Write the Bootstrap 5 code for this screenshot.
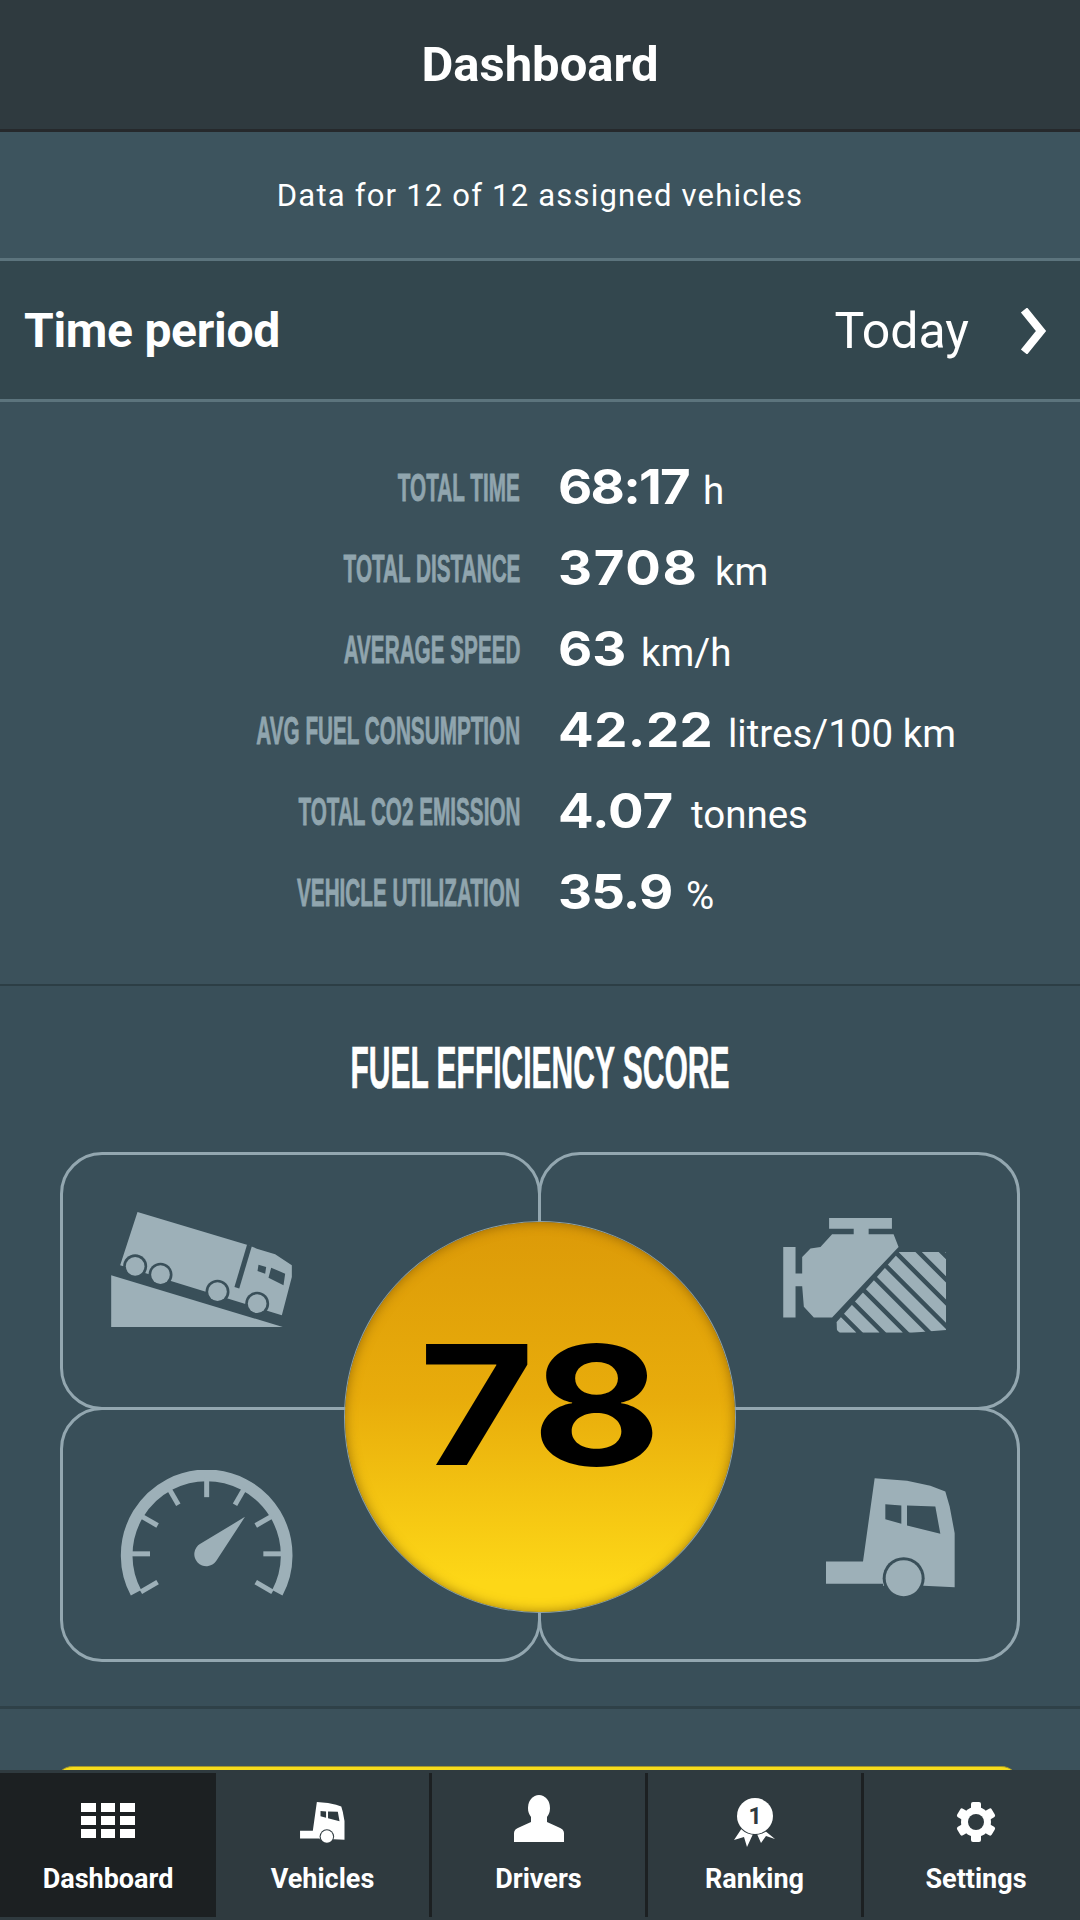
<!DOCTYPE html>
<html lang="en">
<head>
  <meta charset="UTF-8">
  <title>Dashboard</title>
  <link href="https://cdn.jsdelivr.net/npm/bootstrap@5.3.0/dist/css/bootstrap.min.css" rel="stylesheet">
  <style>
    body {
      font-family: Roboto, sans-serif;
      background-color: #3b515b;
      color: #fff;
      width: 1080px;
      height: 1920px;
      overflow: hidden;
    }

    .top-bar {
      height: 132px;
      background-color: #2f3a3f;
      border-bottom: 3px solid #26292c;
      font-size: 49px;
      font-weight: 700;
    }

    .assigned {
      height: 129px;
      padding-top: 3px;
      background-color: #3d545e;
      border-bottom: 3px solid #5c747d;
      font-size: 31px;
      letter-spacing: 1.2px;
    }

    .period {
      height: 141px;
      padding: 2px 33px 0 24px;
      background-color: #33474e;
      border-bottom: 3px solid #5c747d;
      font-size: 48px;
    }
    .period b { font-weight: 700; letter-spacing: -.3px; }
    .period-val { font-size: 50px; font-weight: 400; margin-right: 50px; }

    .stats {
      height: 584px;
      padding-top: 46px;
      border-bottom: 2px solid #2c3e45;
    }

    .stat { height: 81px; }

    .stat-name {
      width: 520px;
      text-align: right;
      color: #90a5ae;
      font: 700 38px "Liberation Sans", sans-serif;
      -webkit-text-stroke: .8px #90a5ae;
    }
    .stat-name span {
      display: inline-block;
      white-space: nowrap;
      transform: scaleX(.545);
      transform-origin: right center;
    }

    .stat-val { padding-left: 38px; }
    .num {
      display: inline-block;
      font: 700 48px Inter, sans-serif;
    }
    .num span {
      display: inline-block;
      transform: scaleX(1.1);
      transform-origin: left center;
    }
    .num-time { width: 145px; letter-spacing: -1.6px; }
    .num-dist { width: 157px; letter-spacing: 1.5px; }
    .num-speed { width: 83px; }
    .num-fuel { width: 170px; letter-spacing: .4px; }
    .num-co2 { width: 133px; }
    .num-util { width: 128px; letter-spacing: -.8px; }
    .unit { font-size: 38.5px; font-weight: 400; }

    .score {
      height: 723px;
      padding-top: 52px;
      background-color: #394f59;
      border-bottom: 3px solid #2f4148;
    }
    .score-title {
      height: 60px;
      font: 700 60px/60px "Liberation Sans", sans-serif;
      -webkit-text-stroke: .6px #fff;
      text-align: center;
    }
    .score-title span {
      display: inline-block;
      white-space: nowrap;
      transform: scaleX(.5);
    }

    .score-grid {
      position: relative;
      display: grid;
      grid-template-columns: 481px 479px;
      grid-template-rows: 258px 252px;
      width: 960px;
      margin: 54px 0 0 60px;
    }
    .cell {
      border: 3px solid #93a7b0;
      border-radius: 42px;
    }
    .cell + .cell { margin-left: -3px; }
    .cell:nth-child(n+3) { margin-top: -3px; }
    .cell:nth-child(3) { margin-left: 0; }
    .cell svg { display: block; fill: #9db0b8; --cut: #394f59; }
    .cell-truck { padding: 57px 0 0 48px; }
    .cell-engine { padding: 63px 0 0 242px; }
    .cell-gauge { padding: 60px 0 0 57px; }
    .cell-cab { padding: 68px 0 0 285px; }

    .dial {
      position: absolute;
      left: 285px;
      top: 70px;
      width: 390px;
      height: 390px;
      border-radius: 50%;
      background: linear-gradient(#dc9a08, #e8ac0b 45%, #f4c512 72%, #fdd717 92%);
      box-shadow: inset 0 0 12px rgba(110, 70, 0, .6), 0 0 0 1px #8ea2a8;
      color: #000;
      font: 700 166px/1 Inter, sans-serif;
      padding-bottom: 24px;
    }
    .dial span { display: inline-block; transform: scaleX(1.2); }

    .next-card {
      height: 120px;
      margin: 57px 61px 0 55px;
      border-radius: 18px 18px 0 0;
      background-color: #f6dc1c;
      border-top: 1px solid #a4972a;
    }

    .tabs {
      height: 150px;
      padding: 3px 0;
      background-color: #2f3a3f;
      flex-wrap: nowrap;
    }
    .tabs .nav-link {
      width: 216px;
      height: 144px;
      padding: 0;
      color: #fff;
      background-color: #2f3a3f;
      font-size: 27px;
      font-weight: 700;
      border-right: 3px solid #1c2022;
      --cut: #2f3a3f;
    }
    .tabs .nav-link:last-child { border-right: 0; padding-left: 8px; }
    .tabs .nav-link.active {
      color: #fff;
      background-color: #1c2022;
      border-right: 0;
      --cut: #1c2022;
    }
    .tab-ico {
      height: 66px;
      margin-top: 20px;
    }
    .tab-ico svg { display: block; fill: #fff; }
    .cut { fill: var(--cut); }
    .ico-cab, .ico-gear { margin-top: 9px; }
    .ico-person { margin-top: 2px; }
    .ico-medal { margin-top: 5px; }

    .squares {
      display: grid;
      grid-template-columns: 15px 14px 15px;
      grid-template-rows: repeat(3, 9px);
      gap: 4px 5px;
      margin-top: 10px;
    }
    .squares i { background-color: #fff; }
  </style>
</head>
<body class="d-flex flex-column">

<svg width="0" height="0" class="position-absolute">
  <symbol id="cab" viewBox="857 235 390 356">
    <path d="M1003 235L1100 243 1170 258 1215 275 1228 320 1243 400V562L1150 558H1028V552H857V485H968Z"/>
    <path class="cut" d="M1035 313L1083 317V372L1035 358ZM1100 317L1185 320 1200 402 1100 377Z"/>
    <circle class="cut" cx="1090" cy="535" r="63"/>
    <circle cx="1090" cy="535" r="54"/>
  </symbol>
</svg>

<main class="flex-grow-1 overflow-hidden">
  <header class="top-bar d-flex align-items-center justify-content-center">Dashboard</header>

  <div class="assigned d-flex align-items-center justify-content-center">Data for 12 of 12 assigned vehicles</div>

  <div class="period d-flex align-items-center">
    <b class="me-auto">Time period</b>
    <span class="period-val">Today</span>
    <svg width="28" height="46" viewBox="0 0 28 46"><path d="M5 2L22 23 5 44" fill="none" stroke="#fff" stroke-width="8"/></svg>
  </div>

  <section class="stats">
    <div class="stat d-flex align-items-center">
      <div class="stat-name"><span>TOTAL TIME</span></div>
      <div class="stat-val"><span class="num num-time"><span>68:17</span></span><span class="unit">h</span></div>
    </div>
    <div class="stat d-flex align-items-center">
      <div class="stat-name"><span>TOTAL DISTANCE</span></div>
      <div class="stat-val"><span class="num num-dist"><span>3708</span></span><span class="unit">km</span></div>
    </div>
    <div class="stat d-flex align-items-center">
      <div class="stat-name"><span>AVERAGE SPEED</span></div>
      <div class="stat-val"><span class="num num-speed"><span>63</span></span><span class="unit">km/h</span></div>
    </div>
    <div class="stat d-flex align-items-center">
      <div class="stat-name"><span>AVG FUEL CONSUMPTION</span></div>
      <div class="stat-val"><span class="num num-fuel"><span>42.22</span></span><span class="unit">litres/100 km</span></div>
    </div>
    <div class="stat d-flex align-items-center">
      <div class="stat-name"><span>TOTAL CO2 EMISSION</span></div>
      <div class="stat-val"><span class="num num-co2"><span>4.07</span></span><span class="unit">tonnes</span></div>
    </div>
    <div class="stat d-flex align-items-center">
      <div class="stat-name"><span>VEHICLE UTILIZATION</span></div>
      <div class="stat-val"><span class="num num-util"><span>35.9</span></span><span class="unit">%</span></div>
    </div>
  </section>

  <section class="score">
    <div class="score-title"><span>FUEL EFFICIENCY SCORE</span></div>
    <div class="score-grid">
      <div class="cell cell-truck">
        <svg width="182" height="116" viewBox="213 245 545 348">
          <path d="M213 435L728 590H213Z"/>
          <path d="M292 245L625 345 650 355 705 372 755 405V440L725 555 240 405Z"/>
          <path d="M628 345L590 472" stroke="#394f59" stroke-width="15" fill="none"/>
          <path class="cut" d="M655 403L678 410 675 430 652 422ZM693 412L735 430 730 465 685 442Z"/>
          <g class="cut">
            <circle cx="285" cy="408" r="36"/><circle cx="361" cy="433" r="36"/>
            <circle cx="532" cy="484" r="36"/><circle cx="651" cy="520" r="36"/>
          </g>
          <circle cx="285" cy="408" r="28"/><circle cx="361" cy="433" r="28"/>
          <circle cx="532" cy="484" r="28"/><circle cx="651" cy="520" r="28"/>
        </svg>
      </div>
      <div class="cell cell-engine">
        <svg width="164" height="115" viewBox="728 263 492 346">
          <defs>
            <clipPath id="hatch"><path d="M888 577L1077 365H1218V600L1115 608H890Z"/></clipPath>
          </defs>
          <path d="M866 263H1055V295H985V312H1060L1075 350 875 562H820L790 530 785 468H765V562H728V350H765V430H785V380L810 355 840 350 875 312H940V295H866Z"/>
          <path clip-path="url(#hatch)" fill="none" stroke="#9db0b8" stroke-width="36" d="M615 300L935 620M685 300L1005 620M755 300L1075 620M825 300L1145 620M895 300L1215 620M965 300L1285 620M1035 300L1355 620M1105 300L1425 620M1175 300L1495 620"/>
        </svg>
      </div>
      <div class="cell cell-gauge">
        <svg width="174" height="129" viewBox="237 207 522 386">
          <path d="M285 575A240 240 0 1 1 709 575" fill="none" stroke="#9db0b8" stroke-width="35"/>
          <g stroke="#9db0b8" stroke-width="15">
            <path d="M497 230V288"/>
            <path d="M497 230V288" transform="rotate(30 497 458)"/>
            <path d="M497 230V288" transform="rotate(60 497 458)"/>
            <path d="M497 230V288" transform="rotate(90 497 458)"/>
            <path d="M497 230V288" transform="rotate(120 497 458)"/>
            <path d="M497 230V288" transform="rotate(-30 497 458)"/>
            <path d="M497 230V288" transform="rotate(-60 497 458)"/>
            <path d="M497 230V288" transform="rotate(-90 497 458)"/>
            <path d="M497 230V288" transform="rotate(-120 497 458)"/>
          </g>
          <path d="M612 347L478 428A36 36 0 1 0 526 479Z"/>
        </svg>
      </div>
      <div class="cell cell-cab">
        <svg width="130" height="119"><use href="#cab"/></svg>
      </div>
      <div class="dial d-flex align-items-center justify-content-center"><span>78</span></div>
    </div>
  </section>

  <div class="next-card"></div>
</main>

<nav class="nav tabs">
  <a class="nav-link active d-flex flex-column align-items-center" href="#">
    <div class="tab-ico">
      <div class="squares">
        <i></i><i></i><i></i><i></i><i></i><i></i><i></i><i></i><i></i>
      </div>
    </div>
    Dashboard
  </a>
  <a class="nav-link d-flex flex-column align-items-center" href="#">
    <div class="tab-ico"><svg width="45" height="41" class="ico-cab"><use href="#cab"/></svg></div>
    Vehicles
  </a>
  <a class="nav-link d-flex flex-column align-items-center" href="#">
    <div class="tab-ico">
      <svg width="50" height="47" viewBox="0 0 50 47" class="ico-person">
        <ellipse cx="25" cy="13" rx="11" ry="13"/>
        <path d="M0 47V38Q0 34 6 32L17 27V20H33V27L44 32Q50 34 50 38V47Z"/>
      </svg>
    </div>
    Drivers
  </a>
  <a class="nav-link d-flex flex-column align-items-center" href="#">
    <div class="tab-ico">
      <svg width="41" height="49" viewBox="0 0 41 49" class="ico-medal">
        <path d="M0 42L8 30 19 36 13 49 10 39ZM30 32L41 41 32 38 27 45 23 36Z"/>
        <circle class="cut" cx="21" cy="18" r="19"/>
        <circle cx="21" cy="18" r="18"/>
        <text class="cut" x="21" y="26" text-anchor="middle" font-size="23" font-weight="700" font-family="Roboto, sans-serif">1</text>
      </svg>
    </div>
    Ranking
  </a>
  <a class="nav-link d-flex flex-column align-items-center" href="#">
    <div class="tab-ico">
      <svg width="40" height="40" viewBox="0 0 40 40" class="ico-gear">
        <circle cx="20" cy="20" r="15"/>
        <g>
          <rect x="15" y="0" width="10" height="8" rx="2"/>
          <rect x="15" y="0" width="10" height="8" rx="2" transform="rotate(60 20 20)"/>
          <rect x="15" y="0" width="10" height="8" rx="2" transform="rotate(120 20 20)"/>
          <rect x="15" y="0" width="10" height="8" rx="2" transform="rotate(180 20 20)"/>
          <rect x="15" y="0" width="10" height="8" rx="2" transform="rotate(240 20 20)"/>
          <rect x="15" y="0" width="10" height="8" rx="2" transform="rotate(300 20 20)"/>
        </g>
        <circle class="cut" cx="20" cy="20" r="8"/>
      </svg>
    </div>
    Settings
  </a>
</nav>

<script src="https://cdn.jsdelivr.net/npm/bootstrap@5.3.0/dist/js/bootstrap.bundle.min.js"></script>
</body>
</html>
